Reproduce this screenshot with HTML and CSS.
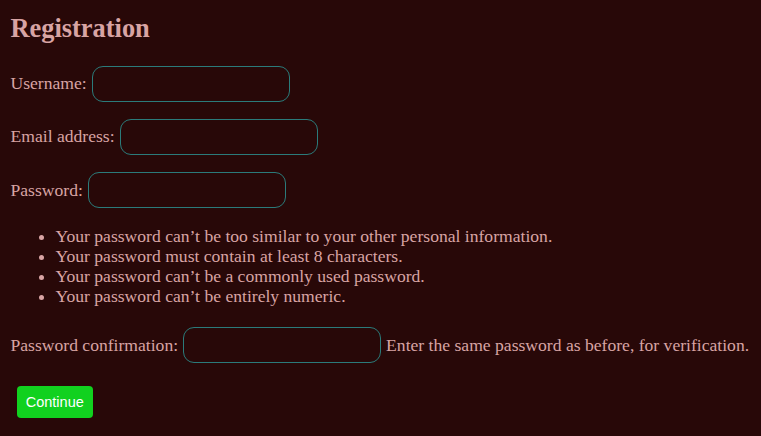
FILE: index.html
```html
<!DOCTYPE html>
<html lang="en">
<head>
<meta charset="utf-8">
<title>Registration</title>
<link rel="stylesheet" href="styles.css">
</head>
<body>
<main class="page">
  <h1 class="title">Registration</h1>
  <form class="form">
    <div class="row">
      <label class="label" for="username">Username:</label>
      <input class="field" id="username" type="text">
    </div>
    <div class="row">
      <label class="label" for="email">Email address:</label>
      <input class="field" id="email" type="email">
    </div>
    <div class="row">
      <label class="label" for="password">Password:</label>
      <input class="field" id="password" type="password">
    </div>
    <ul class="rules">
      <li>Your password can’t be too similar to your other personal information.</li>
      <li>Your password must contain at least 8 characters.</li>
      <li>Your password can’t be a commonly used password.</li>
      <li>Your password can’t be entirely numeric.</li>
    </ul>
    <div class="row row-confirm">
      <label class="label" for="password2">Password confirmation:</label>
      <input class="field" id="password2" type="password">
      <span class="hint">Enter the same password as before, for verification.</span>
    </div>
    <button class="submit" type="button">Continue</button>
  </form>
</main>
</body>
</html>
```
FILE: styles.css
```css
html, body {
  margin: 0;
  padding: 0;
  background: #280808;
}

body {
  color: #d8a4a4;
  font-family: "Liberation Serif", "Times New Roman", serif;
  font-size: 17.6px;
  line-height: normal;
}

.page {
  padding: 13px 10px 10px 10.5px;
}

.title {
  margin: 0 0 22px;
  font-size: 26.4px;
  font-weight: bold;
  line-height: normal;
}

.form {
  display: flex;
  flex-direction: column;
  align-items: flex-start;
}

.row {
  display: flex;
  align-items: center;
  gap: 5px;
  margin-bottom: 17.6px;
}

.field {
  box-sizing: border-box;
  width: 198px;
  height: 35.6px;
  margin: 0;
  padding: 4px 8px;
  background: #280808;
  border: 1px solid #2b7b7a;
  border-radius: 11px;
  color: #d8a4a4;
  font: inherit;
  outline: none;
}

.rules {
  margin: 0 0 21px;
  padding-left: 45px;
  line-height: 20.2px;
}

.row-confirm {
  margin-bottom: 23.4px;
}

.submit {
  margin-left: 6.5px;
  box-sizing: border-box;
  width: 75.5px;
  height: 32px;
  padding: 0;
  background: #11d11f;
  color: #ffffff;
  border: none;
  border-radius: 4px;
  font-family: "Liberation Sans", Arial, sans-serif;
  font-size: 14.5px;
  cursor: pointer;
}
```
